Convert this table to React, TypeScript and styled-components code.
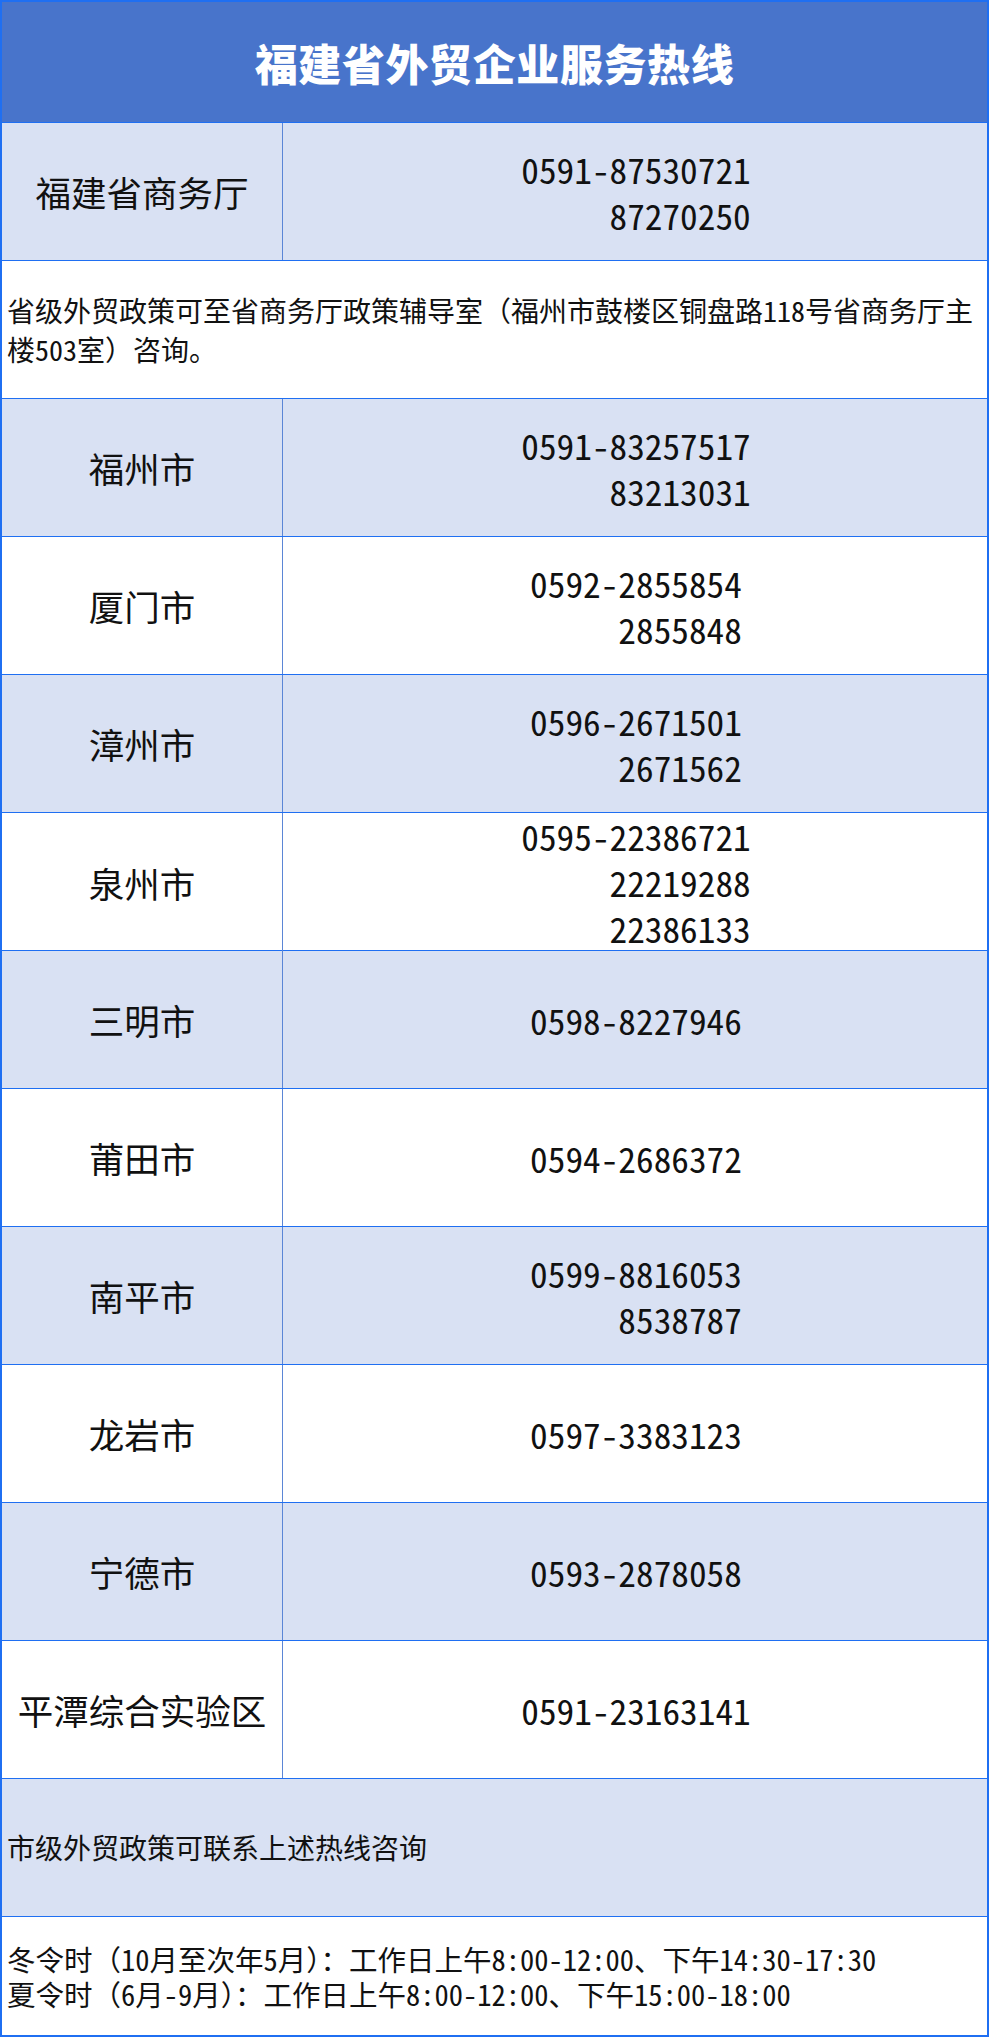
import React from 'react';
import styled, { createGlobalStyle } from 'styled-components';

const LINE = '#1f6ff2';
const DIVIDER = '#5b86d6';
const SHADE = '#d9e1f3';

const GlobalStyle = createGlobalStyle`
  html, body {
    margin: 0;
    padding: 0;
    background: #fff;
  }
  body {
    font-family: "Noto Sans Mono CJK SC", "Noto Sans CJK SC", "Liberation Sans", sans-serif;
    color: #111;
  }
`;

const Sheet = styled.div`
  width: 989px;
  box-sizing: border-box;
  border: 2px solid ${LINE};
`;

const Title = styled.div`
  height: 121px;
  box-sizing: border-box;
  background: #4874cb;
  border-bottom: 1px solid ${LINE};
  display: flex;
  align-items: center;
  justify-content: center;
  color: #fff;
  font-family: "Noto Sans CJK SC", sans-serif;
  font-weight: 900;
  font-size: 43px;
  letter-spacing: 0.6px;
`;

const Row = styled.div<{ $shaded?: boolean }>`
  display: grid;
  grid-template-columns: 281px 1fr;
  height: 138px;
  box-sizing: border-box;
  border-bottom: 1px solid ${LINE};
  background: ${(p) => (p.$shaded ? SHADE : '#fff')};
`;

const Label = styled.div`
  border-right: 1px solid ${DIVIDER};
  display: flex;
  align-items: center;
  justify-content: center;
  font-size: 35.5px;
  white-space: nowrap;
`;

const PhoneCell = styled.div`
  display: flex;
  align-items: center;
  justify-content: center;
  padding-left: 2px;
`;

const PhoneBlock = styled.div`
  text-align: right;
  font-size: 35.3px;
  line-height: 46px;
  white-space: nowrap;
`;

const NoteRow = styled.div<{ $shaded?: boolean; $last?: boolean; $lh: number; $size: number }>`
  height: ${(p) => (p.$last ? '118px' : '138px')};
  box-sizing: border-box;
  border-bottom: ${(p) => (p.$last ? 'none' : `1px solid ${LINE}`)};
  background: ${(p) => (p.$shaded ? SHADE : '#fff')};
  display: flex;
  align-items: center;
  padding: 0 4px 0 5px;
  font-size: ${(p) => p.$size}px;
  line-height: ${(p) => p.$lh}px;
`;

type City = { name: string; phones: string[] };

const cities: City[] = [
  { name: '福州市', phones: ['0591-83257517', '83213031'] },
  { name: '厦门市', phones: ['0592-2855854', '2855848'] },
  { name: '漳州市', phones: ['0596-2671501', '2671562'] },
  { name: '泉州市', phones: ['0595-22386721', '22219288', '22386133'] },
  { name: '三明市', phones: ['0598-8227946'] },
  { name: '莆田市', phones: ['0594-2686372'] },
  { name: '南平市', phones: ['0599-8816053', '8538787'] },
  { name: '龙岩市', phones: ['0597-3383123'] },
  { name: '宁德市', phones: ['0593-2878058'] },
  { name: '平潭综合实验区', phones: ['0591-23163141'] },
];

const Line = ({ name, phones, shaded }: City & { shaded: boolean }) => (
  <Row $shaded={shaded}>
    <Label>{name}</Label>
    <PhoneCell>
      <PhoneBlock>
        {phones.map((p) => (
          <div key={p}>{p}</div>
        ))}
      </PhoneBlock>
    </PhoneCell>
  </Row>
);

const App = () => {
  return (
    <>
      <GlobalStyle />
      <Sheet>
        <Title>福建省外贸企业服务热线</Title>
        <Line name="福建省商务厅" phones={['0591-87530721', '87270250']} shaded />
        <NoteRow $lh={39} $size={28}>
          <div>省级外贸政策可至省商务厅政策辅导室（福州市鼓楼区铜盘路118号省商务厅主楼503室）咨询。</div>
        </NoteRow>
        {cities.map((c, i) => (
          <Line key={c.name} {...c} shaded={i % 2 === 0} />
        ))}
        <NoteRow $shaded $lh={39} $size={28}>
          市级外贸政策可联系上述热线咨询
        </NoteRow>
        <NoteRow $last $lh={35} $size={28.5}>
          <div>
            冬令时（10月至次年5月）：工作日上午8:00-12:00、下午14:30-17:30
            <br />
            夏令时（6月-9月）：工作日上午8:00-12:00、下午15:00-18:00
          </div>
        </NoteRow>
      </Sheet>
    </>
  );
};

export default App;
